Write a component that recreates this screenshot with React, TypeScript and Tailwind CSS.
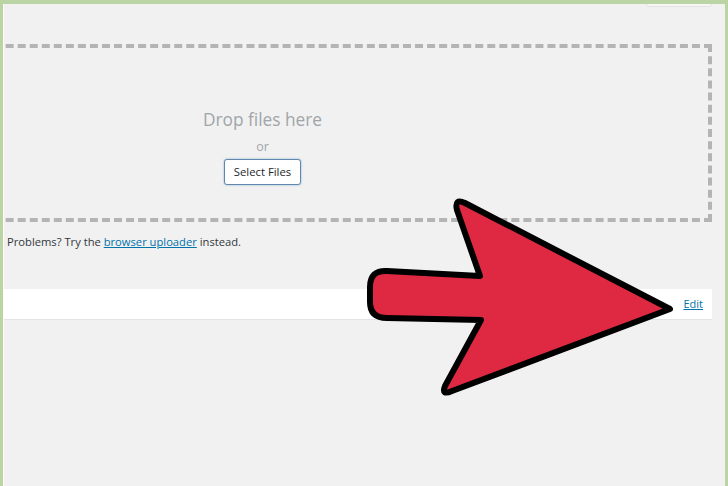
import React from 'react';

function Arrow() {
  return (
    <svg
      className="pointer-events-none absolute left-0 top-0"
      width={728}
      height={486}
      viewBox="0 0 728 486"
    >
      <path
        d="M667 305 L462 199 Q451 194 454 206 L477 272 L384 267 Q367 266 367 283 L367 298 Q367 314 384 314 L478 316 L442 382 Q438 392 449 387 Z"
        fill="#df2942"
        stroke="#000"
        strokeWidth={6}
        strokeLinejoin="round"
      />
    </svg>
  );
}

export default function App() {
  return (
    <div
      className="relative h-[486px] w-[728px] overflow-hidden border-l-[3px] border-r-[3px] border-t-[4px] border-[#bad4a4] bg-[#f1f1f1]"
      style={{ fontFamily: '"Open Sans", "Liberation Sans", sans-serif' }}
    >
      <div className="h-full overflow-hidden border-l border-white pr-[13px]">
        <div className="flex h-[40px] justify-end">
          <div className="-mt-[24px] h-[27px] w-[66px] rounded-[3px] border border-[#e2e2e2] bg-[#f7f7f7]" />
        </div>
        <div className="ml-[-191px] flex h-[178px] w-[899px] flex-col items-center border-4 border-dashed border-[#b4b4b4] pt-[61px]">
          <div className="text-[17.3px] leading-[22px] text-[#a0a5aa]">Drop files here</div>
          <div className="mt-[7px] text-[12.5px] leading-[17px] text-[#a0a5aa]">or</div>
          <button className="mt-[4px] h-[26px] rounded-[3px] border border-[#5f88b0] bg-white px-[9px] text-[11.3px] text-[#23282d] shadow-[0_0_2px_rgba(30,100,160,0.5)]">
            Select Files
          </button>
        </div>
        <p className="mt-[11px] pl-[3px] text-[11.2px] leading-[18px] text-[#32373c]">
          Problems? Try the{' '}
          <a className="text-[#0073aa] underline" href="#">
            browser uploader
          </a>{' '}
          instead.
        </p>
        <div className="mt-[38px] flex h-[31px] items-center justify-end border-b border-[#e2e4e7] bg-white pr-[9px]">
          <a className="text-[11px] text-[#0073aa] underline" href="#">
            Edit
          </a>
        </div>
      </div>
      <Arrow />
    </div>
  );
}
